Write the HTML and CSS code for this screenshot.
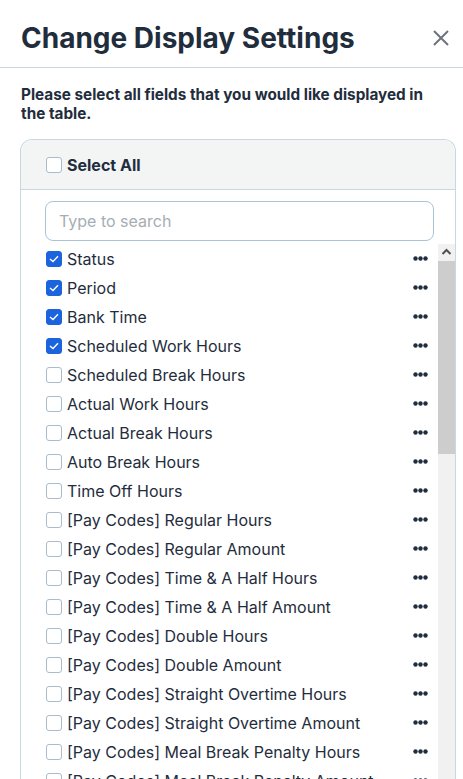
FILE: index.html
```html
<!DOCTYPE html>
<html lang="en">
<head>
    <meta charset="UTF-8">
    <meta name="viewport" content="width=device-width, initial-scale=1.0">
    <title>Change Display Settings</title>
    <link rel="stylesheet" href="styles.css">
</head>
<body>
    <div class="modal">
        <div class="modal-header">
            <h2>Change Display Settings</h2>
            <button class="close" aria-label="Close">
                <svg width="16" height="16" viewBox="0 0 16 16"><path d="M1 1 L15 15 M15 1 L1 15" stroke="#6b7580" stroke-width="2" fill="none"/></svg>
            </button>
        </div>
        <div class="modal-body">
            <p class="intro">Please select all fields that you would like displayed in the table.</p>
            <div class="card">
                <div class="card-head">
                    <label class="field all"><span class="box"></span>Select All</label>
                </div>
                <div class="search-wrap">
                    <input type="text" class="search" placeholder="Type to search">
                </div>
                <div class="list-wrap">
                    <ul class="list" id="list"></ul>
                    <div class="scrollbar" aria-hidden="true">
                        <div class="sb-up">
                            <svg width="17" height="17" viewBox="0 0 17 17"><path d="M4.5 10 L8.5 6 L12.5 10" stroke="#505050" stroke-width="2" fill="none"/></svg>
                        </div>
                        <div class="sb-thumb"></div>
                    </div>
                </div>
            </div>
        </div>
    </div>

    <script>
        const fields = [
            ["Status", true], ["Period", true], ["Bank Time", true], ["Scheduled Work Hours", true],
            ["Scheduled Break Hours"], ["Actual Work Hours"], ["Actual Break Hours"], ["Auto Break Hours"],
            ["Time Off Hours"]
        ];
        const payCodes = ["Regular", "Time & A Half", "Double", "Straight Overtime", "Meal Break Penalty",
            "Rest Break Penalty", "Holiday", "Sick", "Vacation", "PTO"];
        payCodes.forEach(code => {
            fields.push(["[Pay Codes] " + code + " Hours"]);
            fields.push(["[Pay Codes] " + code + " Amount"]);
        });

        const check = '<svg width="10" height="8" viewBox="0 0 10 8"><path d="M1 4 L4 6.5 L9 1.2" stroke="#fff" stroke-width="1.4" fill="none"/></svg>';
        const dots = '<svg width="15" height="5" viewBox="0 0 15 5"><circle cx="2.5" cy="2.5" r="2.2"/><circle cx="7.5" cy="2.5" r="2.2"/><circle cx="12.5" cy="2.5" r="2.2"/></svg>';
        document.getElementById("list").innerHTML = fields.map(([name, on]) =>
            `<li class="row"><label class="field"><span class="box${on ? " on" : ""}">${on ? check : ""}</span>${name.replace(/&/g, "&amp;")}</label><span class="dots">${dots}</span></li>`
        ).join("");
    </script>
</body>
</html>
```

FILE: styles.css
```css
html, body {
    margin: 0;
    height: 100%;
    overflow: hidden;
}
body {
    font-family: Inter, 'Noto Sans', sans-serif;
    color: #1f2d3d;
    background-color: #fff;
}
.modal-header {
    display: flex;
    justify-content: space-between;
    align-items: center;
    height: 68px;
    padding: 8px 13px 0 21px;
    border-bottom: 1px solid #c7d8e4;
    box-sizing: border-box;
}
.modal-header h2 {
    margin: 0;
    font-size: 28px;
    font-weight: 700;
}
.close {
    border: none;
    background: none;
    padding: 0;
    width: 18px;
    height: 18px;
    cursor: pointer;
    display: flex;
    align-items: center;
    justify-content: center;
}
.modal-body {
    padding: 17px 7px 0 20px;
}
.intro {
    margin: 0 0 16px 1px;
    max-width: 428px;
    font-size: 15.3px;
    font-weight: 700;
    line-height: 19px;
}
.card {
    border: 1px solid #c7d8e4;
    border-radius: 12px 12px 0 0;
    border-bottom: none;
}
.card-head {
    height: 49px;
    display: flex;
    align-items: center;
    padding-left: 25px;
    background-color: #f3f5f5;
    border-bottom: 1px solid #c7d8e4;
    border-radius: 12px 12px 0 0;
}
.field {
    display: flex;
    align-items: center;
    gap: 5px;
    font-size: 16px;
    white-space: nowrap;
}
.all {
    font-weight: 700;
}
.box {
    width: 14px;
    height: 14px;
    border: 1px solid #a8bccd;
    border-radius: 3px;
    background-color: #fff;
    display: flex;
    align-items: center;
    justify-content: center;
    flex-shrink: 0;
}
.box.on {
    background-color: #1b64de;
    border-color: #1b64de;
}
.search-wrap {
    padding: 11px 21px 3px 24px;
}
.search {
    width: 100%;
    height: 40px;
    box-sizing: border-box;
    border: 1px solid #a9c4d8;
    border-radius: 8px;
    padding: 0 13px;
    font-family: inherit;
    font-size: 16px;
    color: #1f2d3d;
}
.search::placeholder {
    color: #a6adb4;
}
.list-wrap {
    display: flex;
    height: 540px;
}
.list {
    flex: 1;
    list-style: none;
    margin: 0;
    padding: 0 10px 0 25px;
    overflow: hidden;
}
.scrollbar {
    width: 17px;
    flex-shrink: 0;
    display: flex;
    flex-direction: column;
    background-color: #f1f1f1;
}
.sb-up {
    height: 17px;
    display: flex;
}
.sb-thumb {
    height: 193px;
    background-color: #cdcdcd;
}
.row {
    height: 29px;
    display: flex;
    align-items: center;
    justify-content: space-between;
}
.dots {
    display: flex;
    fill: #1f2d3d;
}
```
